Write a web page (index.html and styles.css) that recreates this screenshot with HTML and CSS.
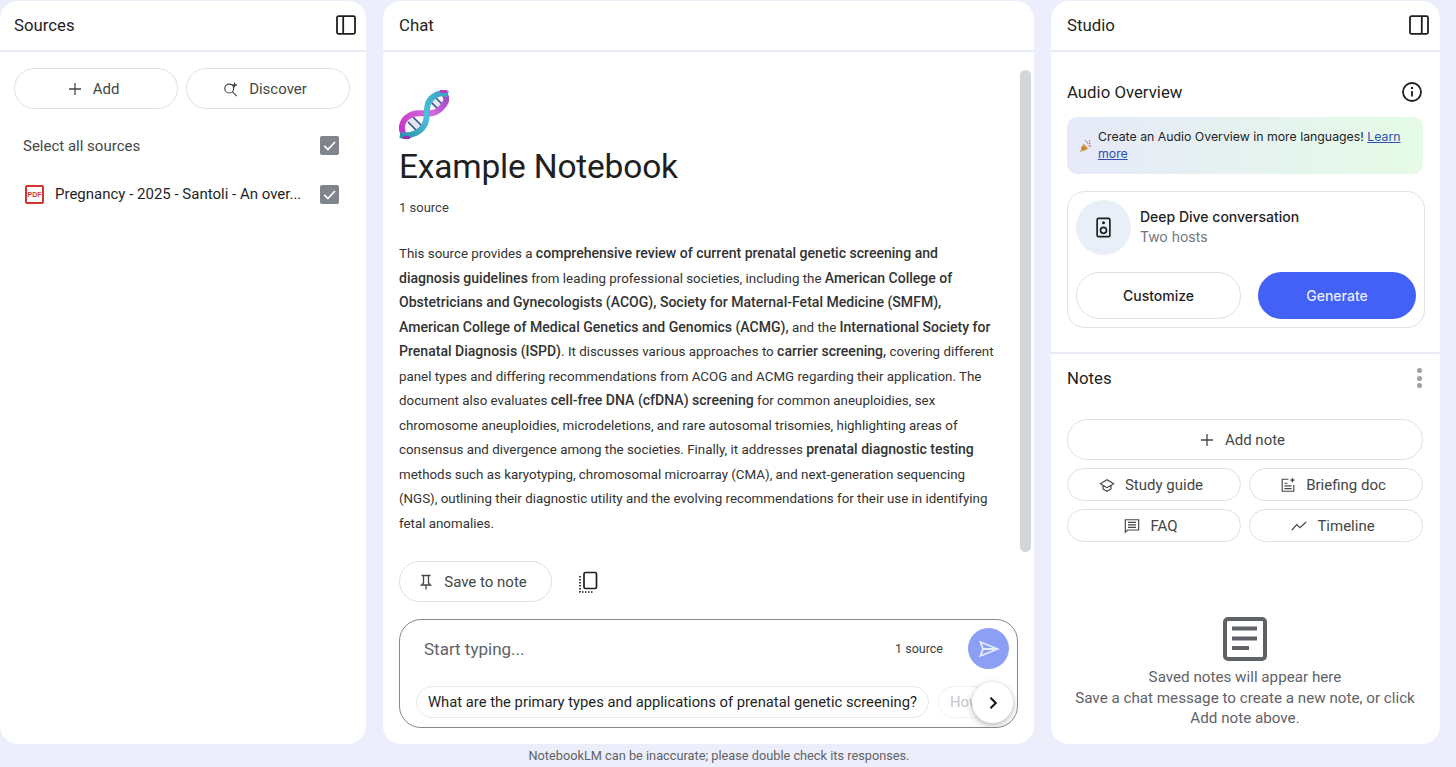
FILE: index.html

```html
<!DOCTYPE html>
<html>
<head>
  <title>NotebookLM</title>
  <link rel="stylesheet" href="styles.css">
</head>
<body>
  <div class="layout">
    <!-- Sources -->
    <section class="panel sources">
      <div class="panel-head">
        <span>Sources</span>
        <svg class="head-icon" viewBox="0 0 20 20"><rect x="1" y="1.200" width="18" height="17.600" rx="1.500"/><path d="M7.200 1.200v17.600"/></svg>
      </div>
      <div class="source-actions">
        <button class="pill">
          <svg class="ico" viewBox="0 0 16 16"><path d="M8 2v12M2 8h12"/></svg>
          Add
        </button>
        <button class="pill">
          <svg class="ico" viewBox="0 0 18 18"><circle cx="7" cy="8.500" r="5"/><path d="M10.500 12l5 5"/><path class="fill" d="M13 1l1 2.500 2.500 1-2.500 1-1 2.500-1-2.500-2.500-1 2.500-1z"/></svg>
          Discover
        </button>
      </div>
      <div class="select-row">
        <span>Select all sources</span>
        <span class="check"><svg viewBox="0 0 20 20"><path d="M4.500 10.500l3.800 3.800 7.500-8"/></svg></span>
      </div>
      <div class="source-row">
        <span class="pdf">PDF</span>
        <span class="source-name">Pregnancy - 2025 - Santoli - An over...</span>
        <span class="check"><svg viewBox="0 0 20 20"><path d="M4.500 10.500l3.800 3.800 7.500-8"/></svg></span>
      </div>
    </section>

    <!-- Chat -->
    <section class="panel chat">
      <div class="panel-head"><span>Chat</span></div>
      <div class="chat-body">
        <div class="scrollbar"></div>
        <svg class="dna" viewBox="0 0 50 50">
          <defs>
            <linearGradient id="mag" x1="0" y1="1" x2="1" y2="0"><stop offset="0" stop-color="#c42fc4"/><stop offset=".6" stop-color="#d569dc"/><stop offset="1" stop-color="#9a45c8"/></linearGradient>
            <linearGradient id="teal" x1="0" y1="1" x2="1" y2="0"><stop offset="0" stop-color="#2b8fb0"/><stop offset=".5" stop-color="#4fc0d6"/><stop offset="1" stop-color="#37a5c4"/></linearGradient>
          </defs>
          <path d="M11 29l11 11M32 8l10 10" stroke="#e4e7f0" stroke-width="9"/>
          <path d="M9 32l10 10M14 27l10 10M30 10l9 9M35 6l9 9" stroke="#33508f" stroke-width="1.500"/>
          <path d="M6 47C0 38 3 28 14 24c8-3 18 3 26-4 7-6 10-12 4-17" stroke="url(#mag)" stroke-width="6"/>
          <path d="M1 45c11 2 23-3 26-14 2-7-1-15 4-21 5-6 11-8 18-6" stroke="url(#teal)" stroke-width="6"/>
          <rect x="4" y="46" width="7" height="3" fill="#a52db5" stroke="none"/>
          <rect x="41" y="0" width="7" height="3" fill="#b43fc4" stroke="none"/>
        </svg>
        <h1>Example Notebook</h1>
        <div class="count">1 source</div>
        <p class="summary">This source provides a <b>comprehensive review of current prenatal genetic screening and</b><br>
        <b>diagnosis guidelines</b> from leading professional societies, including the <b>American College of</b><br>
        <b>Obstetricians and Gynecologists (ACOG), Society for Maternal-Fetal Medicine (SMFM),</b><br>
        <b>American College of Medical Genetics and Genomics (ACMG),</b> and the <b>International Society for</b><br>
        <b>Prenatal Diagnosis (ISPD)</b>. It discusses various approaches to <b>carrier screening,</b> covering different<br>
        panel types and differing recommendations from ACOG and ACMG regarding their application. The<br>
        document also evaluates <b>cell-free DNA (cfDNA) screening</b> for common aneuploidies, sex<br>
        chromosome aneuploidies, microdeletions, and rare autosomal trisomies, highlighting areas of<br>
        consensus and divergence among the societies. Finally, it addresses <b>prenatal diagnostic testing</b><br>
        methods such as karyotyping, chromosomal microarray (CMA), and next-generation sequencing<br>
        (NGS), outlining their diagnostic utility and the evolving recommendations for their use in identifying<br>
        fetal anomalies.</p>
        <div class="msg-actions">
          <button class="pill save">
            <svg class="ico" viewBox="0 0 16 16"><path d="M3.500 1.500h9M5.500 1.500v7.500L3.500 11h9l-2-2V1.500M8 11v4.500"/></svg>
            Save to note
          </button>
          <svg class="copy" viewBox="0 0 20 22"><rect x="6" y="1.500" width="12.500" height="16" rx="1.500"/><path class="dots" d="M2 5v16h14"/></svg>
        </div>
      </div>
      <div class="composer">
        <div class="composer-top">
          <span class="placeholder">Start typing...</span>
          <span class="composer-count">1 source</span>
          <span class="send"><svg viewBox="0 0 24 24"><path d="M3.500 5l17 7-17 7 2.500-7zM6 12h14"/></svg></span>
        </div>
        <div class="chips">
          <span class="chip">What are the primary types and applications of prenatal genetic screening?</span>
          <span class="chip faded">How</span>
        </div>
        <span class="next"><svg viewBox="0 0 16 16"><path d="M5.500 2.800L10.800 8l-5.300 5.200"/></svg></span>
      </div>
    </section>

    <!-- Studio -->
    <section class="panel studio">
      <div class="panel-head">
        <span>Studio</span>
        <svg class="head-icon" viewBox="0 0 20 20"><rect x="1" y="1.200" width="18" height="17.600" rx="1.500"/><path d="M12.800 1.200v17.600"/></svg>
      </div>
      <div class="audio">
        <div class="section-title">
          <span>Audio Overview</span>
          <svg class="info" viewBox="0 0 20 20"><circle cx="10" cy="10" r="9"/><path d="M10 9v5.500"/><circle class="fill" cx="10" cy="6" r="1.200"/></svg>
        </div>
        <div class="banner">
          <svg class="party" viewBox="0 0 16 16"><path d="M1 15l4-10 6 6z" fill="#d9a441"/><path d="M4 12l-1-3M6 13l-2-4M8 12l-2-4" stroke="#b0603a"/><path d="M9 3l1 2M13 4l-2 2M14 8h-3" stroke="#c0568a" stroke-width="1.200"/><path d="M7 1l1 2M12 1v2" stroke="#5a8fc0"/></svg>
          <div class="banner-text">Create an Audio Overview in more languages! <a href="#">Learn</a> <a href="#">more</a></div>
        </div>
        <div class="deep-card">
          <div class="deep-top">
            <span class="speaker"><svg viewBox="0 0 16 22"><rect x="1.200" y="1.200" width="13.600" height="19.600" rx="1.500"/><circle cx="8" cy="14" r="3.200"/><circle class="fill" cx="8" cy="6" r="1.600"/></svg></span>
            <div class="deep-text">
              <div class="deep-title">Deep Dive conversation</div>
              <div class="deep-sub">Two hosts</div>
            </div>
          </div>
          <div class="deep-btns">
            <button class="customize">Customize</button>
            <button class="generate">Generate</button>
          </div>
        </div>
      </div>
      <div class="notes">
        <div class="section-title">
          <span>Notes</span>
          <span class="dots-v"><i></i><i></i><i></i></span>
        </div>
        <button class="pill add-note">
          <svg class="ico" viewBox="0 0 16 16"><path d="M8 2v12M2 8h12"/></svg>
          Add note
        </button>
        <div class="note-grid">
          <button class="pill small">
            <svg class="ico" viewBox="0 0 18 18"><path d="M9 3L1.500 7.500 9 12l7.500-4.500zM4.500 9.500v4L9 16l4.500-2.500v-4"/></svg>
            Study guide
          </button>
          <button class="pill small">
            <svg class="ico" viewBox="0 0 18 18"><path d="M9.500 2.500H2.500v13.500h13V9"/><path d="M5 7h3.500M5 10h8M5 13h8"/><path class="fill" d="M14 .5l.9 2.100 2.100.9-2.100.9L14 6.500l-.9-2.100-2.100-.9 2.100-.9z"/></svg>
            Briefing doc
          </button>
          <button class="pill small">
            <svg class="ico" viewBox="0 0 18 18"><path d="M1.500 2h15v11.500H4L1.500 16z"/><path d="M4.500 5h9M4.500 7.800h9M4.500 10.500h9"/></svg>
            FAQ
          </button>
          <button class="pill small">
            <svg class="ico" viewBox="0 0 18 18"><path d="M1 13.500l5.500-6 3.500 3.500 7-6.500"/></svg>
            Timeline
          </button>
        </div>
        <div class="empty">
          <svg class="empty-icon" viewBox="0 0 44 44"><rect x="2" y="2" width="40" height="40" rx="3"/><path d="M9 11.500h25M9 21.500h25M9 31h17"/></svg>
          <div>Saved notes will appear here</div>
          <div>Save a chat message to create a new note, or click Add note above.</div>
        </div>
      </div>
    </section>
  </div>
  <div class="footer">NotebookLM can be inaccurate; please double check its responses.</div>
</body>
</html>
```

FILE: styles.css

```css
* {
  box-sizing: border-box;
}

body {
  margin: 0;
  height: 767px;
  overflow: hidden;
  background-color: #eceefb;
  font-family: Roboto, "Liberation Sans", sans-serif;
  color: #1f1f1f;
}

button {
  font-family: inherit;
}

svg {
  display: block;
  fill: none;
  stroke: currentColor;
}

svg .fill {
  fill: currentColor;
  stroke: none;
}

.layout {
  display: flex;
  gap: 17px;
  height: 744px;
  padding: 1px 16px 0 0;
}

.panel {
  background-color: #fff;
  border-radius: 18px;
  display: flex;
  flex-direction: column;
  overflow: hidden;
}

.sources {
  width: 366px;
}

.chat {
  width: 651px;
  position: relative;
}

.studio {
  width: 389px;
}

.panel-head {
  height: 51px;
  flex: none;
  display: flex;
  align-items: center;
  justify-content: space-between;
  padding: 0 11px 1px 16px;
  border-bottom: 2px solid #e9ebf4;
  font-size: 16.800px;
}

.sources .panel-head {
  padding-left: 14px;
  padding-right: 10px;
}

.head-icon {
  width: 20px;
  height: 20px;
  stroke-width: 1.800;
}

.ico {
  width: 16px;
  height: 16px;
  stroke-width: 1.300;
  flex: none;
}

.pill {
  display: flex;
  align-items: center;
  justify-content: center;
  gap: 10px;
  background: #fff;
  border: 1px solid #dcdfe8;
  border-radius: 21px;
  font-size: 15px;
  color: #444746;
  height: 41px;
  padding: 0 6px 0 0;
}

.source-actions {
  display: flex;
  gap: 8px;
  padding: 16px 16px 0 14px;
}

.source-actions .pill {
  width: 164px;
}

.select-row {
  display: flex;
  justify-content: space-between;
  align-items: center;
  padding: 22px 27px 0 23px;
  height: 51px;
  font-size: 15px;
  color: #444746;
}

.source-row {
  display: flex;
  align-items: center;
  padding: 0 27px 0 25px;
  height: 40px;
  margin-top: 14px;
  font-size: 15px;
}

.source-name {
  margin-left: 11px;
  flex: 1;
  white-space: nowrap;
}

.check {
  width: 19px;
  height: 19px;
  border-radius: 2px;
  background-color: #80858b;
  flex: none;
  color: #fff;
}

.check svg {
  width: 19px;
  height: 19px;
  stroke-width: 1.800;
}

.pdf {
  width: 19px;
  height: 19px;
  border: 2px solid #d3352c;
  border-radius: 2px;
  color: #d3352c;
  font-family: "Liberation Sans", sans-serif;
  font-size: 7px;
  font-weight: bold;
  line-height: 15px;
  text-align: center;
  flex: none;
}

.chat-body {
  flex: 1;
  position: relative;
  padding: 38px 16px 0;
  min-height: 0;
}

.scrollbar {
  position: absolute;
  right: 3px;
  top: 18px;
  width: 11px;
  height: 482px;
  border-radius: 6px;
  background-color: #d3d5d9;
}

.dna {
  width: 50px;
  height: 50px;
}

h1 {
  margin: 7px 0 0;
  font-size: 33.500px;
  letter-spacing: -0.2px;
  line-height: 40px;
  font-weight: 400;
  color: #1f1f1f;
}

.count {
  margin-top: 13px;
  font-size: 13px;
  line-height: 16px;
  color: #3c4043;
}

.summary {
  margin: 26px 0 0;
  font-size: 13.350px;
  line-height: 24.500px;
  white-space: nowrap;
  color: #333;
}

.summary b {
  font-size: 14.050px;
  line-height: 20px;
  font-weight: 500;
}

.msg-actions {
  display: flex;
  align-items: center;
  margin-top: 25px;
  gap: 26px;
}

.save {
  width: 153px;
}

.copy {
  width: 20px;
  height: 22px;
  stroke-width: 1.700;
  color: #1f1f1f;
}

.copy .dots {
  stroke-dasharray: 1.500 1.500;
}

.composer {
  position: relative;
  flex: none;
  margin: 0 16px 16px;
  height: 109px;
  border: 1px solid #85878c;
  border-radius: 22px;
  padding: 8px 8px 0 16px;
  overflow: hidden;
}

.composer-top {
  display: flex;
  align-items: center;
  height: 41px;
}

.placeholder {
  flex: 1;
  padding-left: 8px;
  font-size: 17px;
  color: #5f6368;
}

.composer-count {
  font-size: 12.500px;
  color: #3c4043;
  margin-right: 25px;
}

.send {
  width: 41px;
  height: 41px;
  border-radius: 50%;
  background-color: #8b9ff5;
  color: #e8ebfd;
  display: flex;
  align-items: center;
  justify-content: center;
}

.send svg {
  width: 24px;
  height: 24px;
  stroke-width: 1.800;
}

.chips {
  display: flex;
  gap: 9px;
  margin-top: 17px;
}

.chip {
  flex: none;
  height: 32px;
  padding: 0 11px;
  line-height: 30px;
  border: 1px solid #e6e8f0;
  border-radius: 16px;
  font-size: 14.770px;
  white-space: nowrap;
  color: #1f1f1f;
}

.chip.faded {
  color: #c4c7c9;
  border-color: #f0f1f5;
}

.next {
  position: absolute;
  right: 4px;
  bottom: 4px;
  width: 41px;
  height: 41px;
  border-radius: 50%;
  background-color: #fff;
  box-shadow: 0 2px 6px rgba(0, 0, 0, 0.3);
  display: flex;
  align-items: center;
  justify-content: center;
  color: #111;
}

.next svg {
  width: 16px;
  height: 16px;
  stroke-width: 2;
}

.audio {
  padding: 0 15px 0 16px;
  height: 302px;
  flex: none;
  border-bottom: 2px solid #e9ebf4;
}

.section-title {
  display: flex;
  align-items: center;
  justify-content: space-between;
  height: 30px;
  font-size: 16.800px;
}

.audio .section-title {
  margin-top: 24px;
  height: 31px;
  padding-right: 3px;
}

.info {
  width: 20px;
  height: 20px;
  stroke-width: 1.800;
}

.banner {
  display: flex;
  align-items: center;
  margin-top: 10px;
  width: 356px;
  height: 57px;
  border-radius: 10px;
  background: linear-gradient(90deg, #e6e9fa, #e5fbe6);
  padding: 0 12px;
}

.party {
  width: 14px;
  height: 14px;
  flex: none;
  stroke: none;
}

.banner-text {
  margin-left: 5px;
  font-family: Inter, sans-serif;
  font-size: 12.300px;
  line-height: 16.500px;
  color: #1f1f1f;
}

.banner-text a {
  color: #2f4fb5;
}

.deep-card {
  margin-top: 17px;
  width: 358px;
  height: 137px;
  border: 1px solid #dfe1e8;
  border-radius: 18px;
  padding: 8px;
  font-family: Inter, sans-serif;
}

.deep-top {
  display: flex;
  align-items: center;
  gap: 9px;
}

.speaker {
  width: 55px;
  height: 55px;
  border-radius: 50%;
  background-color: #e9eff9;
  display: flex;
  align-items: center;
  justify-content: center;
}

.speaker svg {
  width: 15px;
  height: 21px;
  stroke-width: 1.800;
}

.deep-text {
  padding-bottom: 2px;
}

.deep-title {
  font-size: 14px;
  font-weight: 500;
  line-height: 20px;
}

.deep-sub {
  font-size: 14px;
  line-height: 20px;
  color: #70757a;
}

.deep-btns {
  display: flex;
  gap: 17px;
  margin-top: 17px;
}

.customize,
.generate {
  height: 47px;
  border-radius: 24px;
  font-size: 14px;
  font-weight: 500;
  padding: 0 0 1px;
}

.customize {
  width: 165px;
  background: #fff;
  border: 1px solid #dcdfe8;
  color: #1f1f1f;
}

.generate {
  width: 158px;
  background-color: #4360f7;
  border: none;
  color: #e9edff;
}

.notes {
  flex: 1;
  padding: 9px 17px 0 16px;
}

.dots-v {
  display: flex;
  flex-direction: column;
  gap: 2.500px;
  margin-right: 1px;
}

.dots-v i {
  width: 5px;
  height: 5px;
  border-radius: 50%;
  background-color: #9aa0a6;
}

.add-note {
  width: 356px;
  margin-top: 26px;
}

.note-grid {
  display: grid;
  grid-template-columns: 174px 174px;
  gap: 8px;
  margin-top: 8px;
}

.pill.small {
  height: 33px;
}

.empty {
  margin-top: 75px;
  text-align: center;
  font-size: 15.200px;
  line-height: 20.500px;
  color: #5f6368;
}

.empty-icon {
  width: 44px;
  height: 44px;
  margin: 0 auto 6px;
  stroke-width: 4;
  color: #5f6368;
}

.footer {
  padding-right: 18px;
  text-align: center;
  font-size: 12.750px;
  line-height: 23px;
  color: #5f6368;
}
```
